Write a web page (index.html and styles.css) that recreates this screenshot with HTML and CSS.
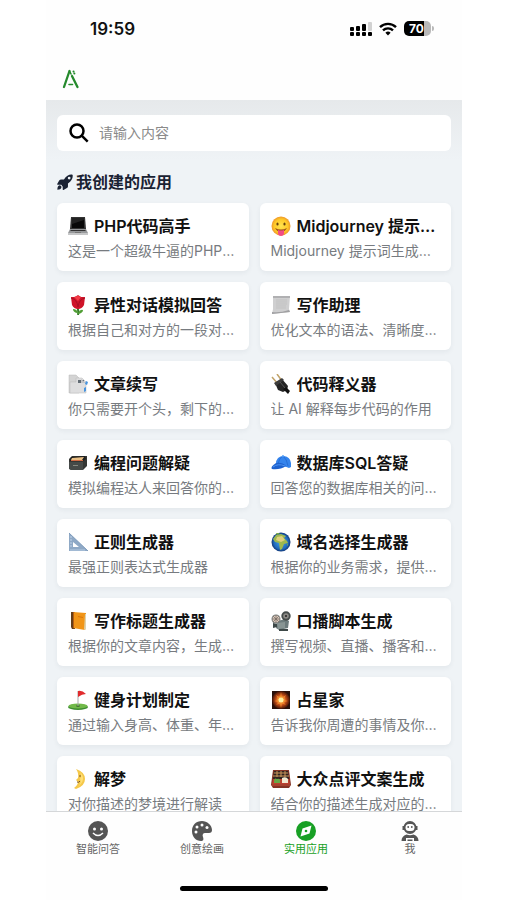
FILE: index.html
```html
<!DOCTYPE html>
<html lang="zh-CN">
<head>
  <meta charset="UTF-8">
  <meta name="viewport" content="width=device-width, initial-scale=1.0">
  <title>实用应用</title>
  <link rel="stylesheet" href="styles.css">
</head>
<body>
  <div class="phone">
    <div class="status-bar">
      <span class="time">19:59</span>
      <div class="status-icons">
        <svg width="22" height="16" viewBox="0 0 22 16">
          <g fill="#000">
            <rect x="0" y="6" width="4" height="4" rx="1"/><rect x="6" y="5" width="4" height="5" rx="1"/><rect x="12" y="3" width="4" height="7" rx="1"/>
            <rect x="0" y="11" width="4" height="4" rx="1"/><rect x="6" y="11" width="4" height="4" rx="1"/><rect x="12" y="11" width="4" height="4" rx="1"/><rect x="18" y="11" width="4" height="4" rx="1"/>
          </g>
          <rect x="18" y="1" width="4" height="9" rx="1" fill="#d2d2d2"/>
        </svg>
        <svg width="18" height="14" viewBox="0 0 18 14" fill="none" stroke="#000" stroke-width="2.4">
          <path d="M1 5.2a11.4 11.4 0 0 1 16 0"/>
          <path d="M4 8.4a7.2 7.2 0 0 1 10 0"/>
          <path d="M6.4 10.7a3.8 3.8 0 0 1 5.2 0L9 13.4z" fill="#000" stroke="none"/>
        </svg>
        <div class="battery">70</div>
      </div>
    </div>

    <header class="header">
      <svg class="logo" width="18" height="20" viewBox="0 0 18 20" fill="none" stroke="#258a2d" stroke-width="2.3" stroke-linecap="round">
        <path d="M2 18 7.500 2"/>
        <path d="M10 7l5.500 11"/>
        <path d="M7.500 2l1.500 3M7 15.500h3.500" stroke-width="1.600"/>
        <path d="M11.500 2.600h.1M12.300 4.600h.1" stroke-width="2"/>
      </svg>
    </header>

    <main class="content">
      <label class="search">
        <svg width="20" height="20" viewBox="0 0 20 20" fill="none" stroke="#000" stroke-width="2.5">
          <circle cx="8" cy="8" r="6.5"/><path d="M12.700 12.700l6 6"/>
        </svg>
        <input type="text" placeholder="请输入内容" aria-label="搜索">
      </label>

      <h2 class="section-title">
        <svg width="16" height="16" viewBox="0 0 512 512" fill="#1a2233">
          <path d="M156 382c-13-37-19-27-29-39L15 343c-13 0-20-14-14-25l64-110c15-25 36-34 60-34h92C293 50 407 0 487 20c4 1 7 4 8 8 17 90-25 195-149 272v88c0 26-9 45-34 60l-109 63c-11 6-25-2-25-14V396zM384 174a44 44 0 1 0 0-88 44 44 0 0 0 0 88z" fill-rule="evenodd" transform="translate(5 0)"/>
          <path d="M12 500c0-70 14-122 58-136 38-12 81 25 71 68-12 48-60 68-129 68z"/>
        </svg>
        我创建的应用
      </h2>

      <div class="app-grid">
        <a class="card" href="#">
          <h3>
            <svg viewBox="0 0 20 20"><path d="M3 1h14l1 12H2z" fill="#333"/><path d="M4 2h12v10H4z" fill="#080808"/><path d="M4 2h12v2L4 8z" fill="#222"/><path d="M2 13h16l2 4H0z" fill="#96989a"/><path d="M3 14h14l1 1H2z" fill="#333"/><path d="M0 17h20v2H0z" fill="#c5c6c7"/><path d="M7 16h6v1H7z" fill="#777"/></svg>
            <span>PHP代码高手</span>
          </h3>
          <p>这是一个超级牛逼的PHP代码高手</p>
        </a>
        <a class="card" href="#">
          <h3>
            <svg viewBox="0 0 20 20"><defs><radialGradient id="face"><stop offset="0" stop-color="#ffe34f"/><stop offset=".7" stop-color="#ffc928"/><stop offset="1" stop-color="#ee982a"/></radialGradient></defs><circle cx="10" cy="10" r="9.5" fill="url(#face)"/><ellipse cx="6.5" cy="8" rx="1.1" ry="1.5" fill="#67400e"/><ellipse cx="13.5" cy="8" rx="1.1" ry="1.5" fill="#67400e"/><path d="M4 12q6 3 12 0-2 4-6 4t-6-4z" fill="#a0561c"/><path d="M7 14q3 1 6 0v3a3 3 0 0 1-6 0z" fill="#f24c85"/></svg>
            <span>Midjourney 提示词生成器</span>
          </h3>
          <p>Midjourney 提示词生成工具</p>
        </a>
        <a class="card" href="#">
          <h3>
            <svg viewBox="0 0 20 20"><path d="M10 10c-1 4 1 5 0 10" fill="none" stroke="#357b2c" stroke-width="2"/><path d="M9 18Q5 17 5 14q4 0 5 4 2-4 5-3 0 3-5 4z" fill="#519e35"/><path d="M3 2l4 0 3-2 3 2 4 0-1 8q-2 4-6 4T4 10z" fill="#cf1429"/><path d="M6 2q4-2 7 0l-3 4z" fill="#f43b46"/><path d="M3 3q6 1 7 9M17 3q-6 1-7 9" stroke="#a80f24" fill="none"/></svg>
            <span>异性对话模拟回答</span>
          </h3>
          <p>根据自己和对方的一段对话，模拟回答</p>
        </a>
        <a class="card" href="#">
          <h3>
            <svg viewBox="0 0 20 20"><path d="M2 1h17l-1 13 1 3-18 2 1-5z" fill="#cfcfd0"/><path d="M2 1h17v2H2z" fill="#b0b0b2"/><path d="M1 17q8 1 17-2l1 2-18 2z" fill="#a0a0a2"/><path d="M5 5h11M5 7h11M5 9h11M5 11h10M5 13h10" stroke="#bcbcbd" stroke-width=".7"/></svg>
            <span>写作助理</span>
          </h3>
          <p>优化文本的语法、清晰度和简洁度</p>
        </a>
        <a class="card" href="#">
          <h3>
            <svg viewBox="0 0 20 20"><path d="M1 1h7l3 3v15H1z" fill="#d4d4d4" stroke="#b8b8b8" stroke-width=".5"/><path d="M8 4h6l4 4v11H2V8h6z" fill="#dededf" stroke="#bbb" stroke-width=".5"/><path d="M10 6h6v3h-6z" fill="#606a73"/><path d="M13 5l5 4h-5z" fill="#c2c4c7"/><path d="M18 7l2 1-1 3-2-1M16 14l2-1v4l-2 1z" fill="#4794df"/></svg>
            <span>文章续写</span>
          </h3>
          <p>你只需要开个头，剩下的交给我来写</p>
        </a>
        <a class="card" href="#">
          <h3>
            <svg viewBox="0 0 20 20"><path d="M1 3l6 7M6 0l5 7" stroke="#c1a36a" stroke-width="1.5"/><path d="M4 9l7-4 6 7-1 4-4 2-5-2z" fill="#242424"/><path d="M3 9l8-5 2 2-8 6z" fill="#3c3c3c"/><path d="M12 15l3-2 4 4-2 3z" fill="#111"/><path d="M9 8l5 6" stroke="#555"/></svg>
            <span>代码释义器</span>
          </h3>
          <p>让 AI 解释每步代码的作用</p>
        </a>
        <a class="card" href="#">
          <h3>
            <svg viewBox="0 0 20 20"><path d="M4 3h15v10l-4 4H3l-2-2V6z" fill="#343634"/><path d="M3 4l14-1 1 3-3 2H2z" fill="#1e1f1e"/><path d="M4 5l12-1-2 3H3z" fill="#e9bf84"/><path d="M3 7h12v1H3z" fill="#d26b43"/><path d="M1 9h14v8H3l-2-1z" fill="#464a48"/><path d="M5 12h5v1H5z" fill="#858880"/></svg>
            <span>编程问题解疑</span>
          </h3>
          <p>模拟编程达人来回答你的编程问题</p>
        </a>
        <a class="card" href="#">
          <h3>
            <svg viewBox="0 0 20 20"><path d="M5 11q0-8 8-8 8 1 7 11l-2 1q-5-3-13-1z" fill="#3484ed"/><path d="M12 3q4 3 5 10M12 3q-4 2-5 9" stroke="#1c60c6" stroke-width=".6" fill="none"/><path d="M5 10q6-1 10 3-6 4-14 3-2-2 4-6z" fill="#1d62cf"/><path d="M2 14q5-4 12-1" stroke="#4c93f2" fill="none"/><circle cx="12" cy="3" r="1" fill="#5aa4fa"/></svg>
            <span>数据库SQL答疑</span>
          </h3>
          <p>回答您的数据库相关的问题和疑惑</p>
        </a>
        <a class="card" href="#">
          <h3>
            <svg viewBox="0 0 20 20"><path d="M1 1l19 18H1zM5 10v5h6z" fill="#8fa9c6" fill-rule="evenodd"/><path d="M1 1l19 18" stroke="#7d9bbb"/><path d="M2 18h15" stroke="#b5cbe2"/><path d="M2 5h2M2 8h2M2 11h2M2 14h2" stroke="#e3f0ff" stroke-width=".6"/></svg>
            <span>正则生成器</span>
          </h3>
          <p>最强正则表达式生成器</p>
        </a>
        <a class="card" href="#">
          <h3>
            <svg viewBox="0 0 20 20"><defs><radialGradient id="sea"><stop offset="0" stop-color="#43a6f2"/><stop offset=".75" stop-color="#216abb"/><stop offset="1" stop-color="#103779"/></radialGradient></defs><circle cx="10" cy="10" r="9.5" fill="url(#sea)"/><path d="M5 3l5-1 5 2-2 2 3 3 1 2-4 1-2 5-2 1-1-7-4-1-2-3z" fill="#9eb84e"/><path d="M6 5l5-1 3 4-4 2-5-2z" fill="#e0cf7d"/><path d="M5 1l4 0-3 2M16 13l1-2v3z" fill="#78aa47"/></svg>
            <span>域名选择生成器</span>
          </h3>
          <p>根据你的业务需求，提供域名建议</p>
        </a>
        <a class="card" href="#">
          <h3>
            <svg viewBox="0 0 20 20"><path d="M3 1h4v17H4l-1-2z" fill="#643d19"/><path d="M5 1l13 1v15l-1 2-12-2z" fill="#f19518"/><path d="M17 3h1v15l-2 1z" fill="#ddd2ae"/><path d="M5 1h1v16H5z" fill="#b65d12"/><path d="M10 5l5 1v1l-5-1z" fill="#d9750c"/></svg>
            <span>写作标题生成器</span>
          </h3>
          <p>根据你的文章内容，生成合适的标题</p>
        </a>
        <a class="card" href="#">
          <h3>
            <svg viewBox="0 0 20 20"><path d="M6 10l9-2 3 2-1 7-9 2-3-2z" fill="#6c7b7c"/><path d="M6 12l8-1v6l-7 1z" fill="#889594"/><circle cx="5" cy="8" r="4.5" fill="#777b7a"/><circle cx="5" cy="8" r="3.5" fill="#d9c9bd"/><path d="M5 4v8M1 8h8M2 5l6 6M8 5l-6 6" stroke="#73655d" stroke-width=".7"/><circle cx="15" cy="5" r="4.7" fill="#464c4b"/><circle cx="15" cy="5" r="2.8" fill="#8b8985"/><circle cx="15" cy="5" r="1" fill="#222"/><path d="M6 13l-4-1v5l4-1zM8 18h9v2H8z" fill="#3d4848"/></svg>
            <span>口播脚本生成</span>
          </h3>
          <p>撰写视频、直播、播客和广告的口播脚本</p>
        </a>
        <a class="card" href="#">
          <h3>
            <svg viewBox="0 0 20 20"><ellipse cx="10" cy="17" rx="10" ry="3" fill="#3c8c31"/><ellipse cx="10" cy="16" rx="9.5" ry="2.5" fill="#71b949"/><ellipse cx="10" cy="16" rx="2" ry=".7" fill="#315e29"/><path d="M10 1v15" stroke="#a4a7a5"/><path d="M10 1q4-1 8 3-4 0-8 3z" fill="#e12b2d"/></svg>
            <span>健身计划制定</span>
          </h3>
          <p>通过输入身高、体重、年龄制定健身计划</p>
        </a>
        <a class="card" href="#">
          <h3>
            <svg viewBox="0 0 20 20"><defs><radialGradient id="spark"><stop offset="0" stop-color="#fffbd1"/><stop offset=".25" stop-color="#ffc055"/><stop offset=".55" stop-color="#c94f16"/><stop offset="1" stop-color="#421307"/></radialGradient></defs><path d="M1 1h18v18H1z" fill="#29100a"/><circle cx="10" cy="10" r="9" fill="url(#spark)"/><path d="M10 2l1 6 4-3-3 5 5 1-5 1 3 3-4-2-1 5-1-5-4 2 3-3-5-1 5-1-3-5 4 3z" fill="#f28a2a"/><circle cx="10" cy="10" r="2.5" fill="#fff1a4"/></svg>
            <span>占星家</span>
          </h3>
          <p>告诉我你周遭的事情及你的星座</p>
        </a>
        <a class="card" href="#">
          <h3>
            <svg viewBox="0 0 20 20"><path d="M8 0q9 3 9 10T8 20l-2-1q4-3 4-6l-2-2 2-2q1-5-2-9z" fill="#f5c84a"/><path d="M12 3q7 7-2 15 4-5 2-8 2-3 0-7z" fill="#ffdf75"/><path d="M11 7h2M9 13q2 1 3-1" fill="none" stroke="#745327"/></svg>
            <span>解梦</span>
          </h3>
          <p>对你描述的梦境进行解读</p>
        </a>
        <a class="card" href="#">
          <h3>
            <svg viewBox="0 0 20 20"><path d="M2 1h16l2 15-2 3H2l-2-3z" fill="#833325"/><path d="M3 2h14l1 8H2z" fill="#302321"/><path d="M3 4h14M2 7h16M6 2v6M10 2v6M14 2v6" stroke="#cb965a"/><path d="M2 10h16l1 5H1z" fill="#bd4030"/><path d="M3 13q0-5 3-3 4-1 3 4H3z" fill="#67a746"/><path d="M11 14V9q4-2 6 1v4z" fill="#f1e9d1"/><path d="M1 15h18v2H1z" fill="#a8402e"/></svg>
            <span>大众点评文案生成</span>
          </h3>
          <p>结合你的描述生成对应的点评文案</p>
        </a>
      </div>
    </main>

    <nav class="tab-bar">
      <a href="#">
        <svg viewBox="0 0 20 20"><circle cx="10" cy="10" r="10" fill="#555"/><circle cx="6.5" cy="8" r="1.5" fill="#fff"/><circle cx="13.5" cy="8" r="1.5" fill="#fff"/><path d="M5 12q5 5 10 0" stroke="#fff" stroke-width="1.5" fill="none"/></svg>
        智能问答
      </a>
      <a href="#">
        <svg viewBox="0 0 20 20"><path d="M10 0C4 0 0 4 0 10s4 10 9 10c2 0 3-1 2-4-1-2 0-4 2-4h4c2 0 3-1 3-3 0-5-5-9-10-9z" fill="#555"/><g fill="#fff"><circle cx="4" cy="11" r="1.5"/><circle cx="5" cy="6" r="1.5"/><circle cx="10" cy="4" r="1.5"/><circle cx="15" cy="6.5" r="1.5"/></g></svg>
        创意绘画
      </a>
      <a class="active" href="#">
        <svg viewBox="0 0 20 20"><circle cx="10" cy="10" r="10" fill="#18a025"/><path d="M15.500 4.500L13.500 12.500 4.500 15.500 6.500 7.500z" fill="#fff"/><circle cx="10" cy="10" r="1.3" fill="#18a025"/></svg>
        实用应用
      </a>
      <a href="#">
        <svg viewBox="0 0 20 20"><circle cx="10" cy="6.5" r="6.5" fill="#555"/><path d="M2.500 5h2v4h-2zM15.500 5h2v4h-2z" fill="#555"/><rect x="5.5" y="3" width="9" height="7" rx="3.5" fill="#fff"/><circle cx="8.2" cy="6" r=".9" fill="#555"/><circle cx="11.8" cy="6" r=".9" fill="#555"/><path d="M1.500 20q0-5 5-6.500 3.500 1.500 7 0 5 1.500 5 6.500H14v-3H6v3z" fill="#555"/><path d="M7.500 20v-1.500h5V20z" fill="#555"/></svg>
        我
      </a>
    </nav>
    <div class="home-indicator"></div>
  </div>
</body>
</html>
```
FILE: styles.css
```css
* {
  box-sizing: border-box;
}

body {
  margin: 0;
  background: #fff;
  font-family: Inter, "Noto Sans CJK SC", sans-serif;
  color: #111;
}

a {
  color: inherit;
  text-decoration: none;
}

svg {
  flex: none;
}

.phone {
  display: flex;
  flex-direction: column;
  height: 100vh;
  margin: 0 45px 0 46px;
  background: #fefefe;
}

.status-bar {
  display: flex;
  flex: none;
  justify-content: space-between;
  align-items: center;
  height: 57px;
  padding: 0 31px 0 44px;
}

.time {
  font-size: 17px;
  font-weight: 600;
}

.status-icons {
  display: flex;
  align-items: center;
  gap: 7px;
}

.battery {
  position: relative;
  width: 27px;
  height: 15px;
  padding-right: 2px;
  border-radius: 5px;
  background: linear-gradient(to right, #000 75%, #b9b9b9 75%);
  color: #fff;
  font-size: 12px;
  font-weight: 700;
  line-height: 15px;
  text-align: center;
}

.battery::after {
  content: "";
  position: absolute;
  right: -3px;
  top: 5px;
  width: 2px;
  height: 5px;
  border-radius: 0 2px 2px 0;
  background: #b9b9b9;
}

.header {
  display: flex;
  flex: none;
  align-items: center;
  height: 43px;
  padding: 0 16px;
}

/* only the app list is cut off, the tab bar stays in view */
.content {
  flex: 1;
  min-height: 0;
  overflow: hidden;
  padding: 15px 11px 0;
  background: linear-gradient(#e6e9eb, #eff3f6 60px);
}

.search {
  display: flex;
  align-items: center;
  gap: 10px;
  height: 36px;
  padding: 0 12px;
  border-radius: 6px;
  background: #fff;
}

.search input {
  flex: 1;
  min-width: 0;
  height: 20px;
  padding: 0;
  border: none;
  outline: none;
  background: none;
  font-family: inherit;
  font-size: 14px;
  line-height: 20px;
}

.search input::placeholder {
  color: #8a8a8a;
}

.section-title {
  display: flex;
  align-items: center;
  gap: 3px;
  margin: 19px 0 9px;
  color: #1a2233;
  font-size: 16px;
  font-weight: 600;
  line-height: 24px;
}

.app-grid {
  display: grid;
  grid-template-columns: repeat(2, minmax(0, 1fr));
  gap: 11px;
}

.card {
  padding: 11px 11px 9px;
  border-radius: 6px;
  background: #fff;
  box-shadow: 0 2px 5px rgba(30, 50, 70, 0.06);
}

.card h3 {
  display: flex;
  align-items: center;
  gap: 6px;
  margin: 0;
  font-size: 16px;
  font-weight: 600;
  line-height: 24px;
}

.card svg {
  width: 20px;
  height: 20px;
}

.card span,
.card p {
  overflow: hidden;
  white-space: nowrap;
  text-overflow: ellipsis;
}

.card p {
  margin: 2px 0 0;
  color: #777b80;
  font-size: 14px;
  line-height: 22px;
}

.tab-bar {
  display: grid;
  flex: none;
  grid-template-columns: repeat(4, 1fr);
  height: 70px;
  padding-top: 9px;
  border-top: 1px solid #d5d7d9;
}

.tab-bar a {
  display: flex;
  flex-direction: column;
  align-items: center;
  color: #666;
  font-size: 11px;
  line-height: 16px;
}

.tab-bar svg {
  width: 20px;
  height: 20px;
}

.tab-bar .active {
  color: #18a025;
}

.home-indicator {
  flex: none;
  width: 148px;
  height: 5px;
  margin: 5px auto 9px;
  border-radius: 3px;
  background: #000;
}
```
